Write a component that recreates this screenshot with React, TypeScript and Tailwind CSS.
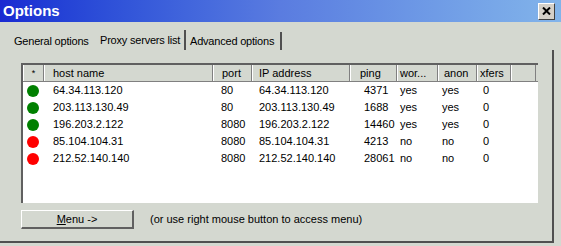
import React from 'react';

const servers = [
  { ok: true, host: '64.34.113.120', port: '80', ip: '64.34.113.120', ping: '4371', works: 'yes', anon: 'yes', xfers: '0' },
  { ok: true, host: '203.113.130.49', port: '80', ip: '203.113.130.49', ping: '1688', works: 'yes', anon: 'yes', xfers: '0' },
  { ok: true, host: '196.203.2.122', port: '8080', ip: '196.203.2.122', ping: '14460', works: 'yes', anon: 'yes', xfers: '0' },
  { ok: false, host: '85.104.104.31', port: '8080', ip: '85.104.104.31', ping: '4213', works: 'no', anon: 'no', xfers: '0' },
  { ok: false, host: '212.52.140.140', port: '8080', ip: '212.52.140.140', ping: '28061', works: 'no', anon: 'no', xfers: '0' },
];

const headers = [
  { label: '*', cls: 'w-[21px] justify-center text-[9px]' },
  { label: 'host name', cls: 'w-[169px] pl-[8px]' },
  { label: 'port', cls: 'w-[39px] pl-[8px]' },
  { label: 'IP address', cls: 'w-[98px] pl-[6px]' },
  { label: 'ping', cls: 'w-[47px] pl-[9px]' },
  { label: 'wor...', cls: 'w-[41px] pl-[2px]' },
  { label: 'anon', cls: 'w-[39px] pl-[5px]' },
  { label: 'xfers', cls: 'w-[34px] pl-[2px]' },
  { label: '', cls: 'w-[25px]' },
];

export default function App() {
  return (
    <div className="w-[561px] h-[246px] bg-[#d4d8d0] overflow-hidden text-[11px] leading-[13px] text-black font-['Liberation_Sans',Arial,sans-serif]">
      {/* Title bar */}
      <div className="h-[22px] flex items-center justify-between pl-[3px] pr-[6px] bg-linear-to-r from-[#1a2ad2] via-[#5a7ce0] to-[#82b4ea]">
        <span className="text-white font-bold text-[15px] leading-[18px]">Options</span>
        <button className="w-[17px] h-[17px] flex items-center justify-center bg-[#d4d0c8] border-t border-l border-white border-r border-b border-r-[#404040] border-b-[#404040]">
          <svg width="9" height="8" viewBox="0 0 9 8">
            <path d="M1 0.5 L8 7.5 M8 0.5 L1 7.5" stroke="#000" strokeWidth="2" />
          </svg>
        </button>
      </div>

      {/* Tabs */}
      <div className="h-[28px] flex items-end pl-[14px] whitespace-nowrap">
        <div className="w-[86px] pb-[2px] tracking-[-0.2px]">General options</div>
        <div className="w-[86px] h-[20px] pt-[4px] border-r-2 border-[#505050] tracking-[-0.2px]">Proxy servers list</div>
        <div className="w-[96px] h-[18px] pl-[4px] pt-[3px] border-r-2 border-[#505050] tracking-[-0.2px]">Advanced options</div>
      </div>

      {/* Panel */}
      <div className="w-[554px] h-[193px] border-r-2 border-b-2 border-[#505050] pt-[13px] pl-[21px] flex flex-col">
        {/* List */}
        <div className="w-[517px] h-[140px] bg-white border-t-2 border-l-2 border-t-[#606060] border-l-[#606060]">
          <div className="flex h-[17px] bg-[#d4d8d0] border-b border-[#808080]">
            {headers.map((h, i) => (
              <div
                key={i}
                className={`flex items-center h-full border-l border-white border-r border-r-[#808080] ${h.cls}`}
              >
                {h.label}
              </div>
            ))}
          </div>
          {servers.map((s) => (
            <div key={s.host} className="grid grid-cols-[30px_168px_38px_105px_36px_42px_41px_1fr] h-[17px] items-center">
              <div className="pl-[4px] flex items-center">
                <span className={`w-[12px] h-[12px] rounded-full ${s.ok ? 'bg-[#008000]' : 'bg-[#ff0000]'}`} />
              </div>
              <div>{s.host}</div>
              <div>{s.port}</div>
              <div>{s.ip}</div>
              <div>{s.ping}</div>
              <div>{s.works}</div>
              <div>{s.anon}</div>
              <div>{s.xfers}</div>
            </div>
          ))}
        </div>

        {/* Menu button row */}
        <div className="flex items-center mt-[7px]">
          <button className="w-[113px] h-[19px] flex items-center justify-center bg-[#d4d8d0] border-t border-l border-white border-r-2 border-b-2 border-r-[#606060] border-b-[#606060]">
            <span>
              <span className="underline">M</span>enu -&gt;
            </span>
          </button>
          <span className="ml-[16px]">(or use right mouse button to access menu)</span>
        </div>
      </div>
    </div>
  );
}
